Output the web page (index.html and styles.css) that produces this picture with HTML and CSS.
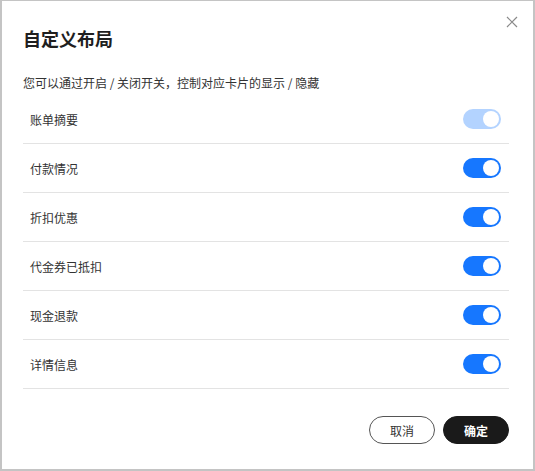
FILE: index.html
```html
<!DOCTYPE html>
<html lang="zh-CN">
<head>
    <meta charset="UTF-8">
    <meta name="viewport" content="width=device-width, initial-scale=1.0">
    <title>自定义布局</title>
    <link rel="stylesheet" href="styles.css">
</head>
<body>

    <div class="dialog">
        <button class="close" aria-label="关闭">
            <svg width="12" height="12" viewBox="0 0 12 12">
                <path d="M1 1 L11 11 M11 1 L1 11" stroke="#8a8a8a" stroke-width="1.2" fill="none"/>
            </svg>
        </button>

        <h1>自定义布局</h1>
        <p class="desc">您可以通过开启 / 关闭开关，控制对应卡片的显示 / 隐藏</p>

        <ul class="lista">
            <li><span>账单摘要</span><span class="switch on disabled"></span></li>
            <li><span>付款情况</span><span class="switch on"></span></li>
            <li><span>折扣优惠</span><span class="switch on"></span></li>
            <li><span>代金券已抵扣</span><span class="switch on"></span></li>
            <li><span>现金退款</span><span class="switch on"></span></li>
            <li><span>详情信息</span><span class="switch on"></span></li>
        </ul>

        <div class="botones">
            <button class="btn cancelar">取消</button>
            <button class="btn confirmar">确定</button>
        </div>
    </div>

</body>
</html>
```

FILE: styles.css
```css
html, body {
    margin: 0;
    height: 100%;
}
body {
    font-family: "Noto Sans CJK SC", "Noto Sans", sans-serif;
    color: #333;
    background: #c4c4c4;
    padding: 1px 2px 2px 2px;
    box-sizing: border-box;
}
.dialog {
    position: relative;
    background: #fff;
    height: 100%;
    box-sizing: border-box;
    padding: 24px 24px 0 21px;
}
.close {
    position: absolute;
    top: 15px;
    right: 15px;
    border: none;
    background: none;
    padding: 0;
    width: 12px;
    height: 12px;
    cursor: pointer;
}
.close svg {
    display: block;
}
h1 {
    margin: 0;
    font-size: 18px;
    line-height: 26px;
    font-weight: bold;
    color: #1f1f1f;
}
.desc {
    margin: 22px 0 0 0;
    font-size: 12px;
    line-height: 20px;
    color: #333;
}
.lista {
    list-style: none;
    margin: 2px 0 0 0;
    padding: 0;
}
.lista li {
    height: 48px;
    border-bottom: 1px solid #e3e3e3;
    display: flex;
    align-items: center;
    justify-content: space-between;
    padding: 0 8px 0 7px;
    font-size: 12px;
    color: #333;
}
.switch {
    position: relative;
    width: 38px;
    height: 20px;
    border-radius: 10px;
    background: #ccc;
}
.switch::after {
    content: "";
    position: absolute;
    top: 2px;
    left: 2px;
    width: 16px;
    height: 16px;
    border-radius: 50%;
    background: #fff;
}
.switch.on {
    background: #1677ff;
}
.switch.on::after {
    left: 20px;
}
.switch.disabled {
    background: #b3d3ff;
}
.botones {
    display: flex;
    justify-content: flex-end;
    gap: 8px;
    margin-top: 27px;
}
.btn {
    width: 66px;
    height: 28px;
    border-radius: 14px;
    font-family: inherit;
    font-size: 12px;
    cursor: pointer;
    padding: 0;
}
.cancelar {
    background: #fff;
    border: 1px solid #555;
    color: #333;
}
.confirmar {
    background: #1a1a1a;
    border: 1px solid #1a1a1a;
    color: #fff;
    font-weight: bold;
}
```
